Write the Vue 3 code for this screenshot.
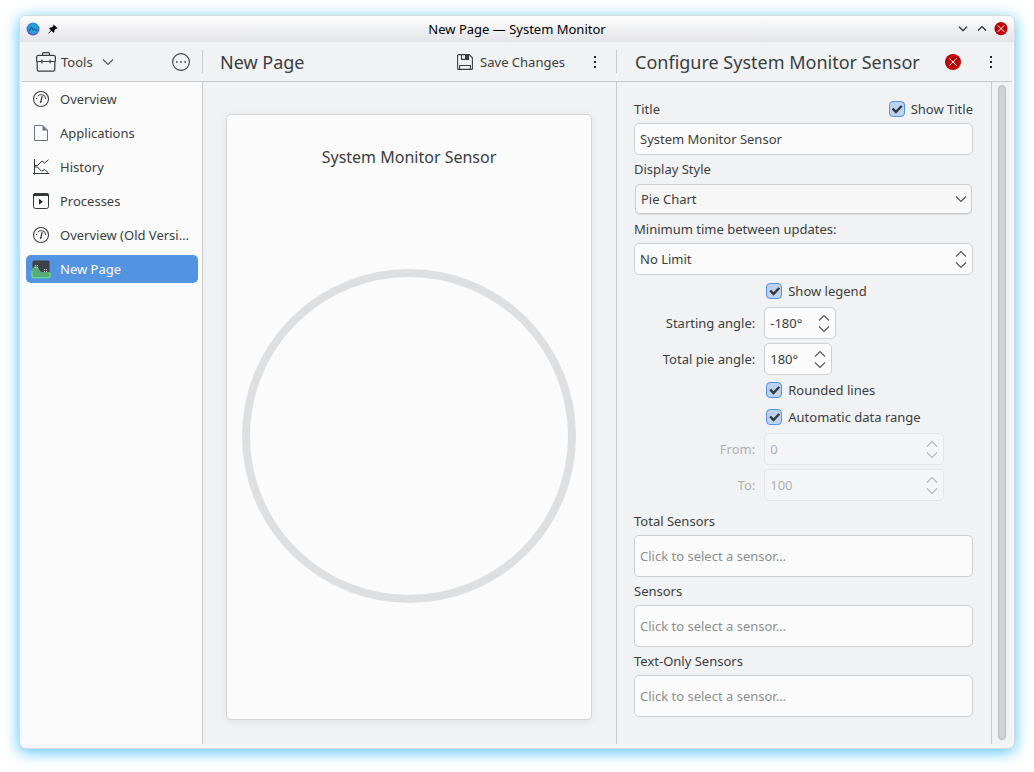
<script setup>
import { ref } from 'vue'

const pages = [
  { name: 'Overview', icon: 'gauge' },
  { name: 'Applications', icon: 'doc' },
  { name: 'History', icon: 'chart' },
  { name: 'Processes', icon: 'process' },
  { name: 'Overview (Old Version)', icon: 'gauge' },
  { name: 'New Page', icon: 'monitor' },
]
const current = ref(5)

const title = ref('System Monitor Sensor')
const showTitle = ref(true)
const style = ref('Pie Chart')
const styles = ['Pie Chart', 'Line Chart', 'Bar Chart', 'Text Only']
const interval = ref('No Limit')
const showLegend = ref(true)
const startAngle = ref('-180°')
const totalAngle = ref('180°')
const rounded = ref(true)
const autoRange = ref(true)
const from = ref('0')
const to = ref('100')
const sensorGroups = ['Total Sensors', 'Sensors', 'Text-Only Sensors']
</script>

<template>
  <div class="desktop">
    <div class="window">
      <div class="titlebar">
        <div class="title-side">
          <svg class="app-icon" width="14" height="14" viewBox="0 0 14 14">
            <defs>
              <linearGradient id="appRing" x1="0" y1="0" x2="0" y2="1">
                <stop offset="0" stop-color="#3d8bea" />
                <stop offset="1" stop-color="#5a4fc8" />
              </linearGradient>
            </defs>
            <circle cx="7" cy="7" r="6.5" fill="url(#appRing)" />
            <circle cx="7" cy="7" r="4.9" fill="#20a5dc" />
            <path d="M2.8 8.2H4L5.4 4.8L7.4 8.4L8.6 6.8L9.6 8.2H11.2" fill="none" stroke="#1c4a80" stroke-width="1" />
          </svg>
          <svg width="10" height="10" viewBox="0 0 10 10">
            <path d="M5.6 .4L9.6 4.2L8.6 4.8L8 4.7L6.4 6.2L6.3 8L5.4 8.7L3.5 6.8L.8 9.5L.3 9.6L.4 9L3 6.3L1.2 4.5L2 3.6L3.8 3.5L5.4 2L5.2 1.2Z" fill="#000" />
          </svg>
        </div>
        <div class="caption">New Page — System Monitor</div>
        <div class="title-side right">
          <button class="plain" aria-label="Minimize">
            <svg width="10" height="14" viewBox="0 0 10 14"><path d="M.9 4.6L5 8.6L9.1 4.6" fill="none" stroke="#1b1e20" stroke-width="1.2" /></svg>
          </button>
          <button class="plain" aria-label="Maximize">
            <svg width="10" height="14" viewBox="0 0 10 14"><path d="M.9 8.6L5 4.6L9.1 8.6" fill="none" stroke="#1b1e20" stroke-width="1.2" /></svg>
          </button>
          <button class="plain" aria-label="Close window">
            <svg width="14" height="14" viewBox="0 0 14 14">
              <circle cx="7" cy="6.6" r="6.6" fill="#bf0000" />
              <path d="M3.8 3.4L10.2 9.8M10.2 3.4L3.8 9.8" stroke="#fff" stroke-width="1" />
            </svg>
          </button>
        </div>
      </div>

      <div class="client">
        <header class="toolbar">
          <div class="tb-left">
            <button class="plain tools">
              <svg width="20" height="20" viewBox="0 0 20 20" fill="none" stroke="#3a3e41" stroke-width="1.2">
                <path d="M6.6 3.4V1.6Q6.6 .6 7.6 .6H12.4Q13.4 .6 13.4 1.6V3.4" />
                <path d="M.6 9.5V5.4Q.6 3.4 2.6 3.4H17.4Q19.4 3.4 19.4 5.4V9.5" />
                <path d="M1.2 9.5V17.6Q1.2 19.2 2.8 19.2H17.2Q18.8 19.2 18.8 17.6V9.5" />
                <path d="M.6 9.5H19.4M5.9 7.4V11.6M14.1 7.4V11.6" />
              </svg>
              <span>Tools</span>
              <svg class="tools-arrow" width="12" height="8" viewBox="0 0 12 8"><path d="M1 1.5L6 6.5L11 1.5" fill="none" stroke="#505457" stroke-width="1.1" /></svg>
            </button>
            <button class="plain" aria-label="More actions">
              <svg width="18" height="18" viewBox="0 0 18 18">
                <circle cx="9" cy="9" r="8.4" fill="none" stroke="#3a3e41" stroke-width="1.1" />
                <path d="M4 8.2h1.6v1.6h-1.6zM8.2 8.2h1.6v1.6h-1.6zM12.4 8.2h1.6v1.6h-1.6z" fill="#3a3e41" />
              </svg>
            </button>
          </div>
          <div class="tb-main">
            <h1>New Page</h1>
            <button class="plain save">
              <svg width="16" height="16" viewBox="0 0 16 16" fill="none" stroke="#3a3e41" stroke-width="1.1">
                <path d="M.6 1.6Q.6 .6 1.6 .6H12.2L15.4 3.8V14.4Q15.4 15.4 14.4 15.4H1.6Q.6 15.4 .6 14.4Z" />
                <path d="M4.5 .6V5.4H11.5V.6" />
                <path d="M8 1h3.5v4h-3.5z" fill="#3a3e41" stroke="none" />
                <path d="M2.6 15.4V11.5H13.4V15.4" />
              </svg>
              <span>Save Changes</span>
            </button>
            <button class="plain dots" aria-label="Page menu">
              <svg width="4" height="14" viewBox="0 0 4 14"><path d="M1 1h2v2h-2zM1 6h2v2h-2zM1 11h2v2h-2z" fill="#232629" /></svg>
            </button>
          </div>
          <div class="tb-config">
            <h2>Configure System Monitor Sensor</h2>
            <button class="plain" aria-label="Close configuration">
              <svg width="16" height="16" viewBox="0 0 16 16">
                <circle cx="8" cy="8" r="8" fill="#bf0000" />
                <path d="M4.2 4.2L11.8 11.8M11.8 4.2L4.2 11.8" stroke="#fff" stroke-width="1" />
              </svg>
            </button>
            <button class="plain dots" aria-label="Configuration menu">
              <svg width="4" height="14" viewBox="0 0 4 14"><path d="M1 1h2v2h-2zM1 6h2v2h-2zM1 11h2v2h-2z" fill="#232629" /></svg>
            </button>
          </div>
        </header>

        <div class="body">
          <nav class="sidebar">
            <button
              v-for="(p, i) in pages"
              :key="p.name"
              class="page"
              :class="{ active: i === current }"
              @click="current = i"
            >
              <svg v-if="p.icon === 'gauge'" width="22" height="22" viewBox="0 0 22 22" fill="none" stroke="#3a3e41">
                <circle cx="11" cy="11" r="7.5" stroke-width="1.1" />
                <path d="M12.2 8L11 13" stroke-width="1.2" />
                <circle cx="10.8" cy="13.8" r="1.1" fill="#3a3e41" stroke="none" />
                <path d="M7.8 8.2Q9.2 6.5 11.4 6.5Q15.6 6.8 15.8 11" stroke-width="1" />
                <path d="M6 10h1v1h-1z" fill="#3a3e41" stroke="none" />
              </svg>
              <svg v-else-if="p.icon === 'doc'" width="22" height="22" viewBox="0 0 22 22">
                <path d="M4.5 3.5H13L17.5 8V18.5H4.5Z" fill="none" stroke="#66758a" />
                <path d="M12.5 3.5V8.5H17.5Z" fill="#66758a" />
              </svg>
              <svg v-else-if="p.icon === 'chart'" width="22" height="22" viewBox="0 0 22 22" fill="none" stroke="#33373a">
                <path d="M4.5 3V18.5M3 17.5H19" />
                <path d="M5 9.5H7.5L12 5L14.5 7L18.5 3.8" />
                <path d="M5 11H7.5L11.5 15.2L14.5 13.5L18.5 17" />
              </svg>
              <svg v-else-if="p.icon === 'process'" width="22" height="22" viewBox="0 0 22 22">
                <rect x="3.5" y="3.5" width="15" height="15" rx="2" fill="none" stroke="#33373a" />
                <path d="M3 5.5Q3 3 5.5 3H16.5Q19 3 19 5.5V6H3Z" fill="#33373a" />
                <path d="M9 8.8L13 11.8L9 14.8Z" fill="#232629" />
              </svg>
              <svg v-else width="22" height="22" viewBox="0 0 22 22">
                <rect x="2.5" y="2.5" width="17" height="17" rx="1.5" fill="#3c4247" />
                <path d="M1.5 11.5Q1.5 10 3 10C4.5 7.5 7 7.5 8.5 10C9.5 12.5 10.5 14 13 14H19Q20.5 14 20.5 15.5V18Q20.5 20.2 18.3 20.2H3.7Q1.5 20.2 1.5 18Z" fill="#5aaa78" />
                <path d="M2 13V17.8Q2 19.6 3.9 19.6H18.1Q20 19.6 20 17.8V14.5" fill="none" stroke="#61d893" stroke-width="1.4" />
                <path d="M5 7h1v1h-1zM7 7h1v1h-1zM5 9h1v1h-1zM7 9h1v1h-1zM14 11h1v1h-1zM16 11h1v1h-1zM14 13h1v1h-1zM16 13h1v1h-1z" fill="#d5dcd8" />
              </svg>
              <span>{{ p.name }}</span>
            </button>
          </nav>

          <main class="content">
            <section class="card">
              <h3>System Monitor Sensor</h3>
              <div class="pie">
                <svg viewBox="0 0 334 334"><circle cx="167" cy="167" r="163" fill="none" stroke="#dedfe0" stroke-width="8" /></svg>
              </div>
            </section>
          </main>

          <aside class="config">
            <div class="label-row">
              <label for="title">Title</label>
              <label class="check"><input v-model="showTitle" type="checkbox" />Show Title</label>
            </div>
            <input id="title" v-model="title" class="field" type="text" />

            <label class="label-row" for="style">Display Style</label>
            <div class="combo">
              <select id="style" v-model="style">
                <option v-for="s in styles" :key="s">{{ s }}</option>
              </select>
              <svg width="12" height="8" viewBox="0 0 12 8"><path d="M1 1.5L6 6.5L11 1.5" fill="none" stroke="#505457" stroke-width="1.1" /></svg>
            </div>

            <label class="label-row" for="interval">Minimum time between updates:</label>
            <div class="spin">
              <input id="interval" v-model="interval" type="text" />
              <div class="steps">
                <button class="plain" aria-label="Increase"><svg width="12" height="8" viewBox="0 0 12 8"><path d="M1 6.5L6 1.5L11 6.5" /></svg></button>
                <button class="plain" aria-label="Decrease"><svg width="12" height="8" viewBox="0 0 12 8"><path d="M1 1.5L6 6.5L11 1.5" /></svg></button>
              </div>
            </div>

            <div class="form">
              <label class="check"><input v-model="showLegend" type="checkbox" />Show legend</label>

              <label class="name" for="start">Starting angle:</label>
              <div class="spin w-start">
                <input id="start" v-model="startAngle" type="text" />
                <div class="steps">
                  <button class="plain" aria-label="Increase"><svg width="12" height="8" viewBox="0 0 12 8"><path d="M1 6.5L6 1.5L11 6.5" /></svg></button>
                  <button class="plain" aria-label="Decrease"><svg width="12" height="8" viewBox="0 0 12 8"><path d="M1 1.5L6 6.5L11 1.5" /></svg></button>
                </div>
              </div>

              <label class="name" for="total">Total pie angle:</label>
              <div class="spin w-total">
                <input id="total" v-model="totalAngle" type="text" />
                <div class="steps">
                  <button class="plain" aria-label="Increase"><svg width="12" height="8" viewBox="0 0 12 8"><path d="M1 6.5L6 1.5L11 6.5" /></svg></button>
                  <button class="plain" aria-label="Decrease"><svg width="12" height="8" viewBox="0 0 12 8"><path d="M1 1.5L6 6.5L11 1.5" /></svg></button>
                </div>
              </div>

              <label class="check"><input v-model="rounded" type="checkbox" />Rounded lines</label>
              <label class="check"><input v-model="autoRange" type="checkbox" />Automatic data range</label>

              <label class="name" :class="{ off: autoRange }" for="from">From:</label>
              <div class="spin" :class="{ off: autoRange }">
                <input id="from" v-model="from" type="text" :disabled="autoRange" />
                <div class="steps">
                  <button class="plain" :disabled="autoRange" aria-label="Increase"><svg width="12" height="8" viewBox="0 0 12 8"><path d="M1 6.5L6 1.5L11 6.5" /></svg></button>
                  <button class="plain" :disabled="autoRange" aria-label="Decrease"><svg width="12" height="8" viewBox="0 0 12 8"><path d="M1 1.5L6 6.5L11 1.5" /></svg></button>
                </div>
              </div>

              <label class="name" :class="{ off: autoRange }" for="to">To:</label>
              <div class="spin" :class="{ off: autoRange }">
                <input id="to" v-model="to" type="text" :disabled="autoRange" />
                <div class="steps">
                  <button class="plain" :disabled="autoRange" aria-label="Increase"><svg width="12" height="8" viewBox="0 0 12 8"><path d="M1 6.5L6 1.5L11 6.5" /></svg></button>
                  <button class="plain" :disabled="autoRange" aria-label="Decrease"><svg width="12" height="8" viewBox="0 0 12 8"><path d="M1 1.5L6 6.5L11 1.5" /></svg></button>
                </div>
              </div>
            </div>

            <template v-for="(g, i) in sensorGroups" :key="g">
              <label class="label-row" :for="'sensors-' + i">{{ g }}</label>
              <input :id="'sensors-' + i" class="field tall" type="text" placeholder="Click to select a sensor…" />
            </template>
          </aside>

          <div class="scroll"><div class="thumb"></div></div>
        </div>
      </div>
    </div>
  </div>
</template>

<style>
body {
  margin: 0;
  background: #fff;
}
</style>

<style scoped>
* {
  box-sizing: border-box;
}
.desktop {
  display: flex;
  min-height: 100vh;
  padding: 15px 19px 23px;
  font: 13px/20px "Noto Sans", sans-serif;
  color: #3a3e41;
}
svg {
  display: block;
  flex: none;
}
button,
input,
select {
  font: inherit;
  color: inherit;
  margin: 0;
}
.plain {
  display: flex;
  align-items: center;
  border: 0;
  padding: 0;
  background: none;
}
.window {
  flex: 1;
  display: flex;
  flex-direction: column;
  border: 1px solid #d9dbdd;
  border-radius: 7px;
  background: #f4f6f8;
  box-shadow: 0 3px 15px rgba(50, 185, 255, 0.85);
}
.titlebar {
  display: flex;
  align-items: center;
  height: 26px;
  padding: 0 6px;
  border-radius: 6px 6px 0 0;
  background: linear-gradient(#fdfdfd, #e3e4e8);
  color: #000;
}
.title-side {
  flex: 1;
  display: flex;
  align-items: center;
  gap: 8px;
}
.title-side.right {
  justify-content: flex-end;
  gap: 9px;
}
.title-side.right .plain:last-child {
  margin-left: -2px;
}
.client {
  flex: 1;
  display: flex;
  flex-direction: column;
  margin: 0 2px 4px;
}
.toolbar {
  display: flex;
  align-items: center;
  height: 40px;
  border-bottom: 1px solid #c8cacc;
  background: #f1f2f4;
}
.tb-left,
.tb-main {
  display: flex;
  align-items: center;
  height: 23px;
  border-right: 1px solid #c8cacc;
}
.tb-left {
  width: 181px;
  padding: 0 12px 0 14px;
  justify-content: space-between;
}
.tools {
  gap: 5px;
}
.tools-arrow {
  margin-left: 4px;
}
.tb-main {
  flex: 1;
  padding: 0 19px 0 17px;
}
.tb-config {
  display: flex;
  align-items: center;
  width: 395px;
  padding: 0 19px 0 18px;
}
h1,
h2 {
  flex: 1;
  margin: 0;
  font-size: 18px;
  line-height: 24px;
  font-weight: 400;
  white-space: nowrap;
}
.save {
  gap: 7px;
}
.dots {
  margin-left: 28px;
}
.body {
  flex: 1;
  display: flex;
}
.sidebar {
  display: flex;
  flex-direction: column;
  gap: 6px;
  width: 181px;
  padding: 3px 4px;
  border-right: 1px solid #c8cacc;
  background: #fbfbfb;
}
.page {
  display: flex;
  align-items: center;
  gap: 8px;
  height: 28px;
  padding: 0 8px 0 4px;
  border: 0;
  border-radius: 5px;
  background: none;
  text-align: left;
}
.page span {
  overflow: hidden;
  text-overflow: ellipsis;
  white-space: nowrap;
}
.page.active {
  background: #5294e2;
  color: #fcfcfc;
}
.content {
  flex: 1;
  display: flex;
  padding: 32px 24px 24px 23px;
  background: #f1f2f4;
}
.card {
  flex: 1;
  display: flex;
  flex-direction: column;
  padding: 31px 15px 15px;
  border: 1px solid #d3d4d5;
  border-radius: 5px;
  background: #fbfbfb;
  box-shadow: 0 2px 8px rgba(0, 0, 0, 0.07);
}
h3 {
  margin: 0;
  font-size: 16px;
  line-height: 22px;
  font-weight: 400;
  text-align: center;
}
.pie {
  flex: 1;
  display: flex;
  align-items: center;
}
.pie svg {
  width: 100%;
}
.config {
  width: 375px;
  padding: 13px 18px 27px 17px;
  border-left: 1px solid #c8cacc;
  background: #f1f2f4;
}
.label-row {
  display: flex;
  align-items: center;
  justify-content: space-between;
  height: 28px;
}
.check {
  display: flex;
  align-items: center;
  gap: 6px;
}
.check input {
  appearance: none;
  display: grid;
  width: 16px;
  height: 16px;
  border: 1px solid #8a8d90;
  border-radius: 4px;
  background: #fbfbfb;
}
.check input:checked {
  border-color: #5294e2;
  background: #bcd2ef;
}
.check input:checked::after {
  content: "";
  margin: 3px 1px 2px 2px;
  background: #33373c;
  clip-path: polygon(0 46%, 17% 30%, 39% 58%, 83% 2%, 100% 18%, 39% 98%);
}
.field,
.spin {
  width: 100%;
  height: 32px;
  border: 1px solid #cdcfd1;
  border-radius: 5px;
  background: #fbfbfb;
}
.field {
  display: block;
  padding: 0 5px;
}
.field.tall {
  height: 42px;
}
.field::placeholder {
  color: #8c8e90;
  opacity: 1;
}
.combo {
  display: grid;
  align-items: center;
  margin: 0 1px;
  height: 32px;
}
.combo select {
  grid-area: 1 / 1;
  appearance: none;
  width: 100%;
  height: 30px;
  padding: 0 5px;
  border: 1px solid #cdcfd1;
  border-bottom-color: #c3c5c7;
  border-radius: 5px;
  background: #f7f7f7;
  box-shadow: 0 1px 0 rgba(0, 0, 0, 0.08);
}
.combo svg {
  grid-area: 1 / 1;
  justify-self: end;
  margin-right: 5px;
  pointer-events: none;
}
.spin {
  display: flex;
  align-items: center;
}
.spin input {
  flex: 1;
  min-width: 0;
  width: 0;
  padding: 0 0 0 5px;
  border: 0;
  background: none;
}
.steps {
  display: flex;
  flex-direction: column;
  gap: 3px;
  padding-right: 5px;
}
.steps path {
  fill: none;
  stroke: #505457;
  stroke-width: 1.1;
}
.w-start {
  width: 72px;
}
.w-total {
  width: 68px;
}
.off {
  opacity: 0.37;
}
.form {
  display: grid;
  grid-template-columns: auto 180px;
  justify-content: center;
  align-items: center;
  gap: 4px 9px;
  margin: 5px 0 6px;
}
.form .check {
  grid-column: 2;
  height: 22px;
  margin-bottom: 1px;
  padding-left: 2px;
}
.name {
  text-align: right;
}
.scroll {
  display: flex;
  width: 21px;
  padding: 3px 6px 4px;
  border-left: 1px solid #c8cacc;
  background: #f1f2f4;
}
.thumb {
  width: 8px;
  border: 1px solid #b9bbbd;
  border-radius: 4px;
  background: #d0d1d3;
}
</style>
